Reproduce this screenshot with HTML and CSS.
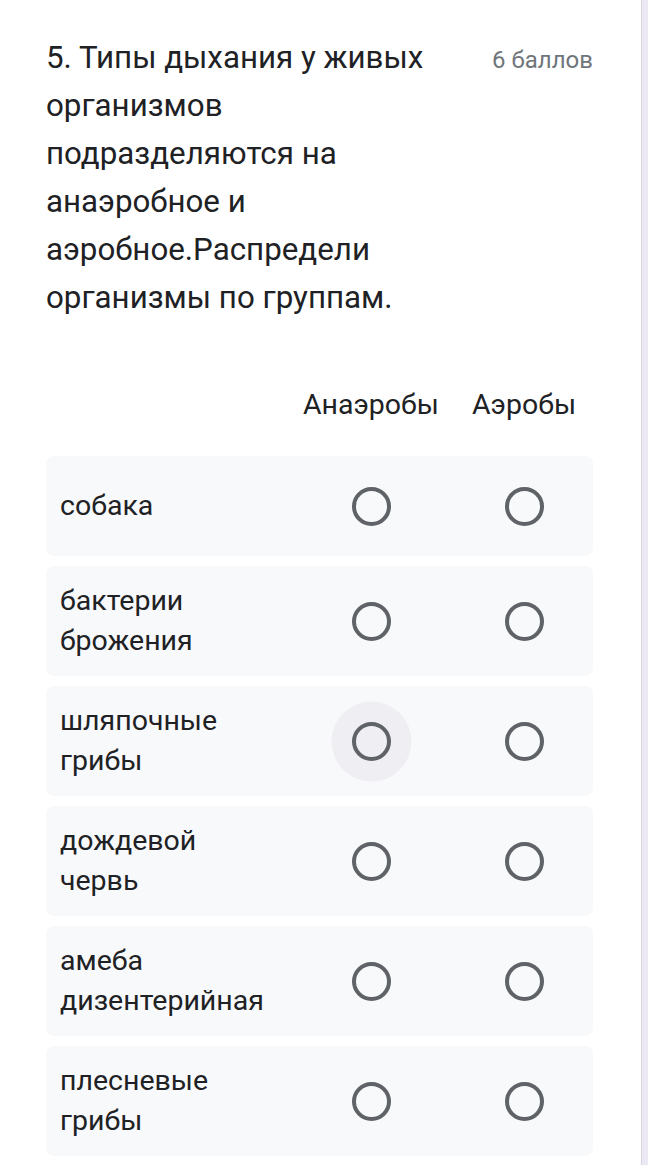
FILE: index.html
```html
<!DOCTYPE html>
<html lang="ru">
<head>
<meta charset="utf-8">
<title>Вопрос 5</title>
<link rel="stylesheet" href="styles.css">
</head>
<body>
<div class="card">
  <div class="head">
    <div class="title">5. Типы дыхания у живых организмов подразделяются на анаэробное и аэробное.Распредели организмы по группам.</div>
    <div class="points">6 баллов</div>
  </div>
  <div class="grid colhead">
    <div></div>
    <div class="col">Анаэробы</div>
    <div class="col">Аэробы</div>
  </div>
  <div class="rows">
    <div class="grid row"><div class="label">собака</div><div class="cell"><span class="radio"></span></div><div class="cell"><span class="radio"></span></div></div>
    <div class="grid row"><div class="label">бактерии брожения</div><div class="cell"><span class="radio"></span></div><div class="cell"><span class="radio"></span></div></div>
    <div class="grid row"><div class="label">шляпочные грибы</div><div class="cell"><span class="radio hover"></span></div><div class="cell"><span class="radio"></span></div></div>
    <div class="grid row"><div class="label">дождевой червь</div><div class="cell"><span class="radio"></span></div><div class="cell"><span class="radio"></span></div></div>
    <div class="grid row"><div class="label">амеба дизентерийная</div><div class="cell"><span class="radio"></span></div><div class="cell"><span class="radio"></span></div></div>
    <div class="grid row"><div class="label">плесневые грибы</div><div class="cell"><span class="radio"></span></div><div class="cell"><span class="radio"></span></div></div>
  </div>
</div>
</body>
</html>
```

FILE: styles.css
```css
html, body {
  margin: 0;
  padding: 0;
}
body {
  background: #ece9f5;
  font-family: Roboto, "Noto Sans", sans-serif;
  color: #202124;
}
.card {
  width: 595px;
  min-height: 1165px;
  background: #ffffff;
  border-right: 1px solid #d6d4de;
  padding: 34px 0 0 46px;
  box-sizing: content-box;
}
.head {
  display: flex;
  justify-content: space-between;
  align-items: flex-start;
  width: 547px;
}
.title {
  width: 410px;
  font-size: 31.3px;
  line-height: 48px;
  color: #202124;
}
.points {
  font-size: 24px;
  line-height: 52px;
  color: #70757a;
}
.grid {
  display: grid;
  grid-template-columns: 1fr 138px 138px;
  column-gap: 15px;
  width: 547px;
  box-sizing: border-box;
}
.colhead {
  margin-top: 60px;
  height: 44px;
  align-items: center;
  font-size: 28.5px;
  color: #202124;
}
.col {
  text-align: center;
  white-space: nowrap;
}
.rows {
  margin-top: 30px;
  display: flex;
  flex-direction: column;
  gap: 10px;
}
.row {
  background: #f8f9fa;
  border-radius: 8px;
  min-height: 100px;
  padding: 15px 0 15px 14px;
  align-items: center;
}
.label {
  font-size: 28.5px;
  line-height: 40px;
  color: #202124;
  max-width: 215px;
}
.cell {
  display: flex;
  justify-content: center;
  align-items: center;
}
.radio {
  width: 39px;
  height: 39px;
  box-sizing: border-box;
  border: 4px solid #5f6368;
  border-radius: 50%;
}
.radio.hover {
  background: #efeef3;
  box-shadow: 0 0 0 20.5px #efeef3;
}
```
